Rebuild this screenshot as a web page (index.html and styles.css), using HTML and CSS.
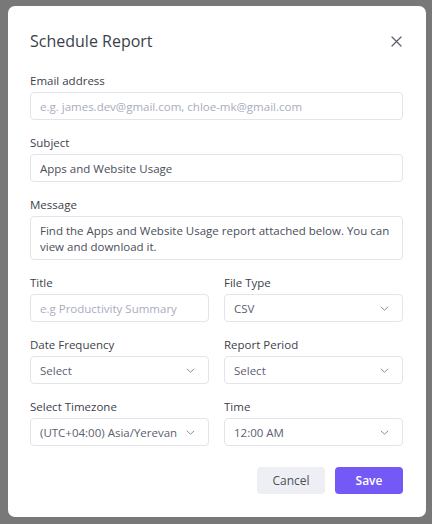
FILE: index.html
```html
<!DOCTYPE html>
<html lang="en">
<head>
<meta charset="utf-8">
<title>Schedule Report</title>
<link rel="stylesheet" href="styles.css">
</head>
<body>
<div class="backdrop">
  <div class="modal">
    <div class="modal-header">
      <h2 class="modal-title">Schedule Report</h2>
      <button class="close-btn" aria-label="Close">
        <svg width="11" height="11" viewBox="0 0 11 11"><path d="M1 1L10 10M10 1L1 10" stroke="#5d616c" stroke-width="1.3" fill="none" stroke-linecap="round"/></svg>
      </button>
    </div>
    <form class="form">
      <div class="field">
        <label class="label">Email address</label>
        <input class="input" type="text" placeholder="e.g. james.dev@gmail.com, chloe-mk@gmail.com">
      </div>
      <div class="field">
        <label class="label">Subject</label>
        <input class="input" type="text" value="Apps and Website Usage">
      </div>
      <div class="field">
        <label class="label">Message</label>
        <textarea class="input textarea">Find the Apps and Website Usage report attached below. You can view and download it.</textarea>
      </div>
      <div class="grid">
        <div class="field">
          <label class="label">Title</label>
          <input class="input" type="text" placeholder="e.g Productivity Summary">
        </div>
        <div class="field">
          <label class="label">File Type</label>
          <div class="input select"><span>CSV</span><svg class="chev" width="9" height="5" viewBox="0 0 9 5"><path d="M0.8 0.8L4.5 4.2L8.2 0.8" stroke="#8b8f9c" stroke-width="1" fill="none"/></svg></div>
        </div>
        <div class="field">
          <label class="label">Date Frequency</label>
          <div class="input select"><span>Select</span><svg class="chev" width="9" height="5" viewBox="0 0 9 5"><path d="M0.8 0.8L4.5 4.2L8.2 0.8" stroke="#8b8f9c" stroke-width="1" fill="none"/></svg></div>
        </div>
        <div class="field">
          <label class="label">Report Period</label>
          <div class="input select"><span>Select</span><svg class="chev" width="9" height="5" viewBox="0 0 9 5"><path d="M0.8 0.8L4.5 4.2L8.2 0.8" stroke="#8b8f9c" stroke-width="1" fill="none"/></svg></div>
        </div>
        <div class="field">
          <label class="label">Select Timezone</label>
          <div class="input select"><span>(UTC+04:00) Asia/Yerevan</span><svg class="chev" width="9" height="5" viewBox="0 0 9 5"><path d="M0.8 0.8L4.5 4.2L8.2 0.8" stroke="#8b8f9c" stroke-width="1" fill="none"/></svg></div>
        </div>
        <div class="field">
          <label class="label">Time</label>
          <div class="input select"><span>12:00 AM</span><svg class="chev" width="9" height="5" viewBox="0 0 9 5"><path d="M0.8 0.8L4.5 4.2L8.2 0.8" stroke="#8b8f9c" stroke-width="1" fill="none"/></svg></div>
        </div>
      </div>
      <div class="actions">
        <button type="button" class="btn btn-cancel">Cancel</button>
        <button type="button" class="btn btn-save">Save</button>
      </div>
    </form>
  </div>
</div>
</body>
</html>
```

FILE: styles.css
```css
* { box-sizing: border-box; }
html, body { margin: 0; padding: 0; }
body {
  background: #787878;
  font-family: "Open Sans", "Noto Sans", sans-serif;
  width: 432px;
  height: 524px;
  overflow: hidden;
}
.backdrop {
  padding: 6px 6px 7px 8px;
}
.modal {
  width: 418px;
  height: 511px;
  background: #fff;
  border-radius: 7px;
  padding: 20px 23px 0 22px;
  display: flex;
  flex-direction: column;
}
.modal-header {
  height: 30px;
  display: flex;
  align-items: center;
  justify-content: space-between;
}
.modal-title {
  margin: 0;
  font-size: 16px;
  font-weight: 500;
  color: #3b3f4a;
}
.close-btn {
  border: 0;
  background: none;
  padding: 0;
  margin-right: 1px;
  width: 11px;
  height: 11px;
  display: flex;
}
.form {
  margin-top: 16px;
  display: flex;
  flex-direction: column;
  gap: 14px;
}
.field {
  display: flex;
  flex-direction: column;
  gap: 2px;
}
.label {
  font-size: 11.5px;
  line-height: 18px;
  color: #3d414c;
}
.input {
  height: 28px;
  border: 1px solid #e2e4ea;
  border-radius: 4px;
  padding: 0 9px;
  font-family: inherit;
  font-size: 11.5px;
  color: #4a4e59;
  background: #fff;
  outline: none;
  width: 100%;
}
.input::placeholder { color: #a9adbf; }
.textarea {
  height: 44px;
  resize: none;
  padding: 6px 6px 6px 9px;
  line-height: 16px;
  overflow: hidden;
}
.grid {
  display: grid;
  grid-template-columns: 1fr 1fr;
  column-gap: 15px;
  row-gap: 14px;
}
.select {
  display: flex;
  align-items: center;
  justify-content: space-between;
  color: #5b6072;
  padding-right: 13px;
  white-space: nowrap;
}
.chev { flex: none; }
.actions {
  margin-top: 7px;
  display: flex;
  justify-content: flex-end;
  gap: 10px;
}
.btn {
  width: 68px;
  height: 27px;
  border: 0;
  border-radius: 4px;
  font-family: inherit;
  font-size: 12px;
  font-weight: 500;
  cursor: pointer;
}
.btn-cancel { background: #edeff5; color: #4b4f5b; }
.btn-save { background: #7459f6; color: #fff; font-weight: 600; }
```
